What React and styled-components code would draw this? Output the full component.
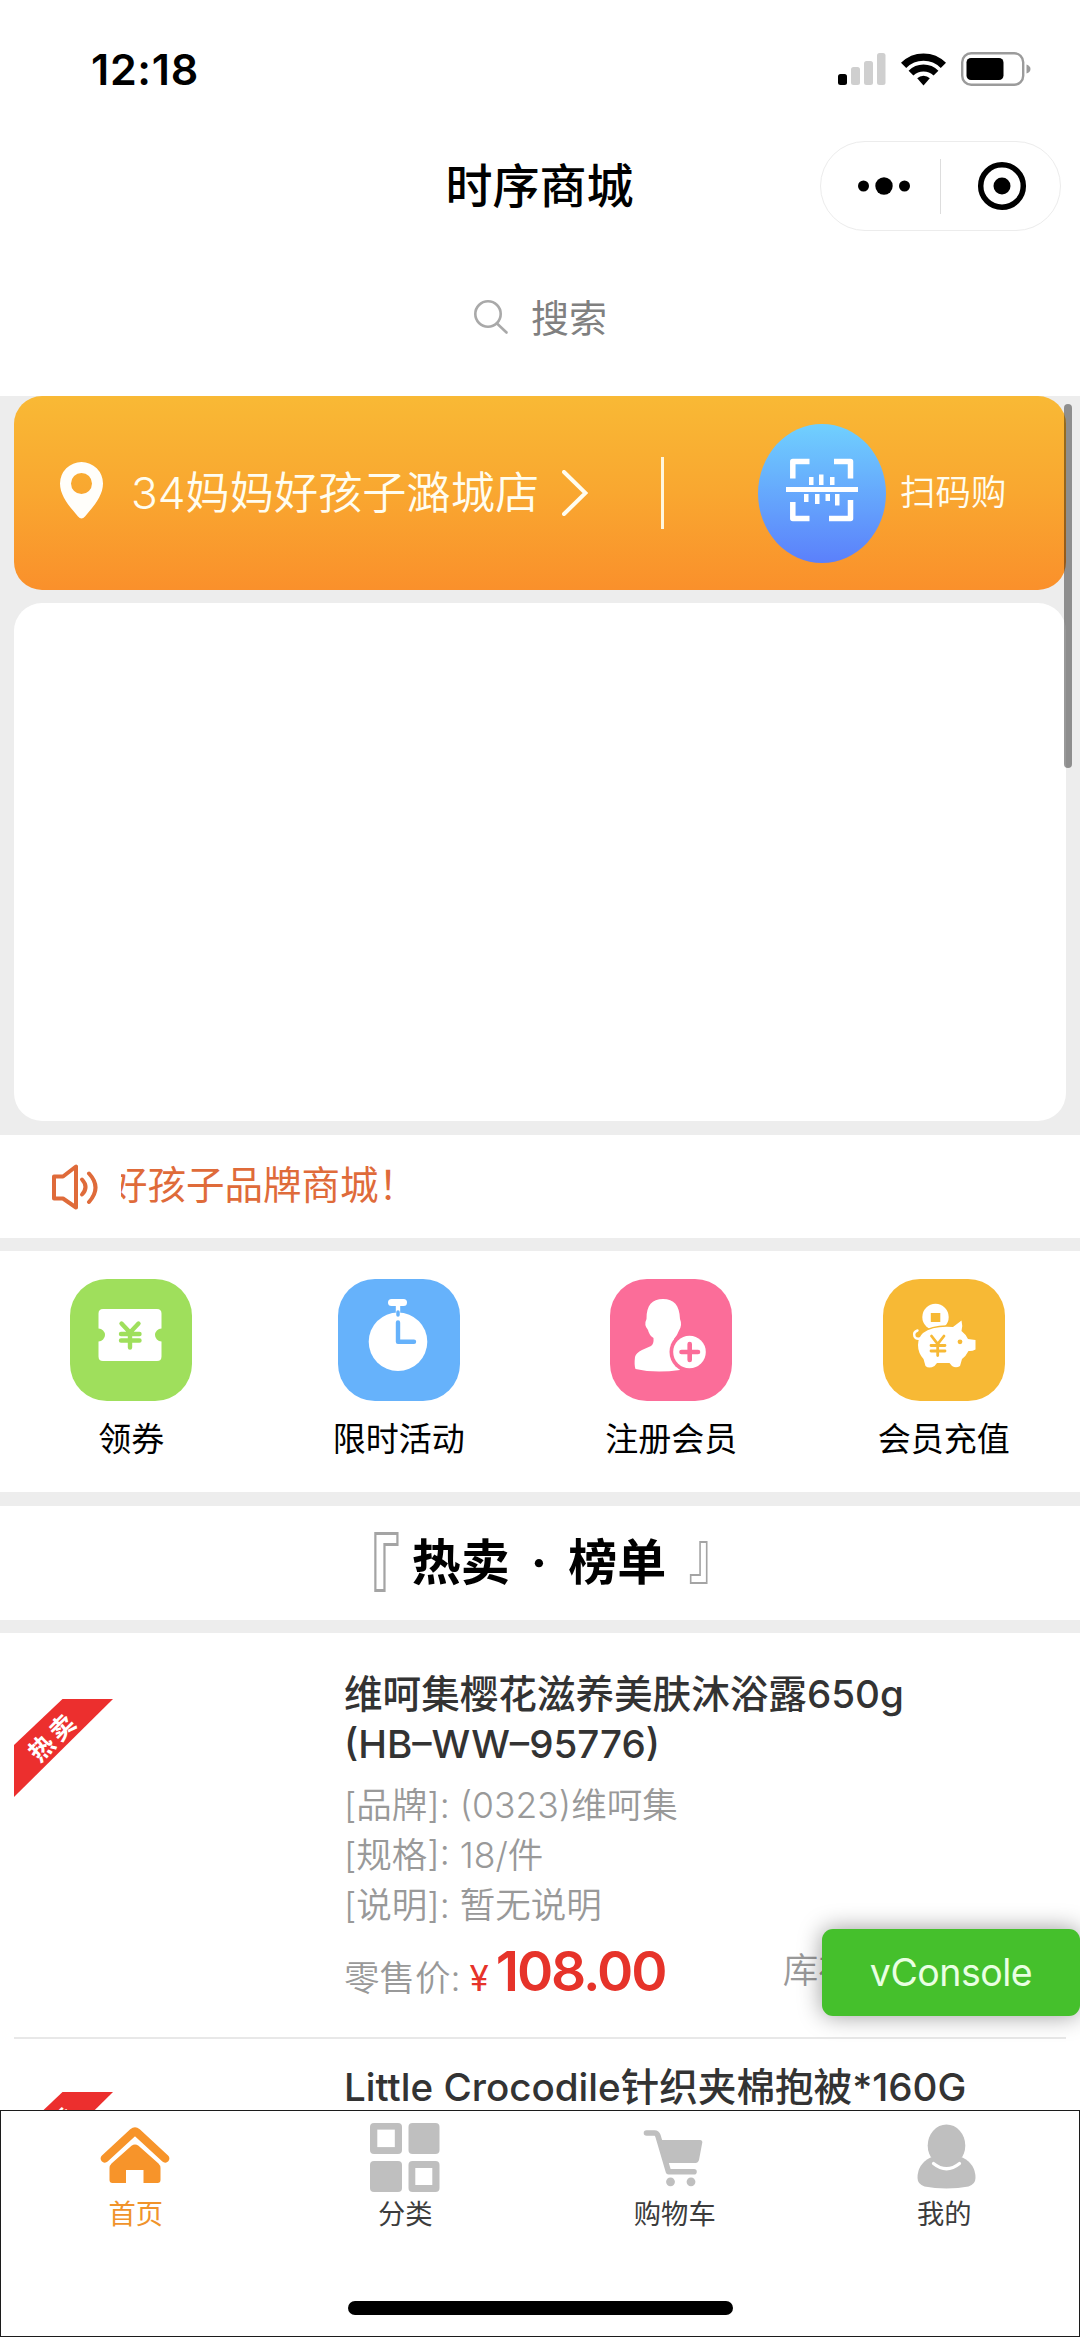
import React from 'react';
import styled, { createGlobalStyle } from 'styled-components';

const GlobalStyle = createGlobalStyle`
  * {
    box-sizing: border-box;
  }

  body {
    margin: 0;
    background: #ffffff;
    font-family: 'Inter', 'Noto Sans CJK SC', sans-serif;
    color: #000000;
  }

  svg {
    display: block;
    flex-shrink: 0;
  }
`;

const Screen = styled.div`
  width: 1080px;
  height: 2337px;
  display: flex;
  flex-direction: column;
  overflow: hidden;
  background: #ffffff;
`;

/* header */

const StatusBar = styled.div`
  height: 136px;
  padding: 1px 49px 0 91px;
  display: flex;
  align-items: center;
  justify-content: space-between;
`;

const Clock = styled.div`
  font-size: 43px;
  font-weight: 600;
  line-height: 50px;
  letter-spacing: 0.7px;
`;

const StatusIcons = styled.div`
  display: flex;
  align-items: center;
  gap: 15px;
`;

const NavBar = styled.div`
  height: 100px;
  padding-right: 19px;
  display: grid;
  grid-template-columns: 820px 241px;
  align-items: center;
`;

const NavTitle = styled.h1`
  margin: 0;
  padding-left: 259px;
  text-align: center;
  font-size: 47px;
  font-weight: 500;
  line-height: 60px;
`;

const Capsule = styled.div`
  height: 90px;
  border: 1.5px solid #ececec;
  border-radius: 45px;
  display: flex;
  align-items: center;
`;

const CapsuleButton = styled.div`
  width: 119px;
  padding-left: ${({ $shift }) => $shift || 0}px;
  display: flex;
  justify-content: center;
`;

const CapsuleLine = styled.div`
  width: 1px;
  height: 55px;
  background: #dddddd;
`;

const SearchBar = styled.div`
  height: 160px;
  padding-top: 4px;
  display: flex;
  align-items: center;
  justify-content: center;
  gap: 22px;
  color: #808080;
  font-size: 38px;
  line-height: 50px;

  svg {
    margin-bottom: 3px;
  }
`;

/* scrolling content */

const Content = styled.div`
  position: relative;
  height: 1714px;
  overflow: hidden;
  background: #ededed;
`;

const ScrollThumb = styled.div`
  position: absolute;
  top: 8px;
  right: 8px;
  width: 8px;
  height: 364px;
  border-radius: 4px;
  background: rgba(0, 0, 0, 0.4);
`;

const StoreBanner = styled.div`
  height: 194px;
  margin: 0 14px 13px;
  padding-left: 46px;
  border-radius: 28px;
  background: linear-gradient(180deg, #f9b935 0%, #f9a730 50%, #fa902b 100%);
  display: flex;
  align-items: center;
  color: #fffdf0;
`;

const StoreName = styled.div`
  width: 406px;
  flex-shrink: 0;
  margin: 0 25px 0 28px;
  font-size: 44.2px;
  font-weight: 350;
  line-height: 60px;
  white-space: nowrap;
`;

const BannerLine = styled.div`
  width: 3px;
  height: 72px;
  flex-shrink: 0;
  margin: 0 94px 0 73px;
  background: #fff6dd;
`;

const ScanBadge = styled.div`
  width: 128px;
  height: 139px;
  flex-shrink: 0;
  margin-right: 14px;
  padding-bottom: 6px;
  border-radius: 50%;
  background: linear-gradient(180deg, #70d0fe, #5b80fb);
  display: flex;
  align-items: center;
  justify-content: center;
`;

const ScanText = styled.div`
  font-size: 35.5px;
  font-weight: 350;
  line-height: 50px;
  white-space: nowrap;
`;

const Swiper = styled.div`
  height: 518px;
  margin: 0 14px 14px;
  border-radius: 28px;
  background: #ffffff;
`;

const Notice = styled.div`
  height: 103px;
  margin-bottom: 13px;
  padding-left: 51px;
  background: #ffffff;
  display: flex;
  align-items: center;
  gap: 22px;
`;

const Marquee = styled.div`
  flex: 1;
  margin-bottom: 3px;
  overflow: hidden;
  font-size: 38.5px;
  line-height: 50px;
  color: #df6b3a;
`;

const MarqueeText = styled.div`
  margin-left: -12px;
  white-space: nowrap;
`;

const Shortcuts = styled.div`
  height: 241px;
  margin-bottom: 14px;
  padding-top: 28px;
  background: #ffffff;
  display: flex;
  align-items: flex-start;
  justify-content: space-around;
`;

const Shortcut = styled.div`
  display: flex;
  flex-direction: column;
  align-items: center;
  gap: 14px;
  font-size: 33px;
  line-height: 48px;
`;

const Tile = styled.div`
  width: 122px;
  height: 122px;
  border-radius: 37px;
  background: ${({ $color }) => $color};
  color: ${({ $color }) => $color};
`;

const SectionTitle = styled.div`
  height: 114px;
  margin-bottom: 13px;
  padding-right: 9px;
  background: #ffffff;
  display: flex;
  align-items: center;
  justify-content: center;
`;

const Heading = styled.h2`
  margin: 0 22px 0 11px;
  font-size: 49px;
  font-weight: 700;
  line-height: 70px;
  word-spacing: 9.5px;
  white-space: pre;
`;

const Bracket = styled.span`
  font-size: ${({ $size }) => $size}px;
  line-height: 70px;
  color: #a4a4a4;
  transform: translateY(${({ $offset }) => $offset}px) scaleY(1.33);
`;

const Product = styled.div`
  height: 406px;
  padding: 0 14px;
  background: #ffffff;
`;

const ProductInner = styled.div`
  height: 100%;
  padding-top: ${({ $first }) => ($first ? 36 : 23)}px;
  border-bottom: 2px solid #e8e8e8;
  display: flex;
  align-items: flex-start;
`;

const Thumb = styled.div`
  width: 330px;
  flex-shrink: 0;
  padding-top: 30px;
`;

const Ribbon = styled.div`
  width: 99px;
  height: 98px;
  background: #ec2f2e;
  clip-path: polygon(49% 0, 100% 0, 0 100%, 0 47%);
  display: flex;
  align-items: center;
  justify-content: center;
`;

const RibbonText = styled.span`
  font-family: 'Noto Sans CJK SC', sans-serif;
  font-size: 25px;
  font-weight: 700;
  line-height: 28px;
  letter-spacing: 4px;
  color: #ffffff;
  transform: translate(-11px, -13px) rotate(-45deg);
  white-space: nowrap;
`;

const Info = styled.div`
  flex: 1;
  min-width: 0;
`;

const Name = styled.h3`
  margin: 0 0 12px;
  font-size: 38.6px;
  font-weight: 500;
  line-height: 50px;
  color: #333333;
  white-space: pre-line;
`;

const Meta = styled.div`
  font-size: 35.5px;
  font-weight: 350;
  line-height: 50px;
  color: #999999;
`;

const PriceRow = styled.div`
  height: 66px;
  margin-top: 7px;
  display: flex;
  align-items: baseline;
  font-size: 35.5px;
  font-weight: 350;
  line-height: 66px;
  color: #999999;
`;

const Currency = styled.span`
  margin: 0 7px 0 9px;
  font-size: 35px;
  font-weight: 400;
  color: #e6332a;
`;

const Price = styled.span`
  width: 287px;
  font-size: 55px;
  font-weight: 600;
  letter-spacing: -2.1px;
  color: #e6332a;
`;

const Stock = styled.span`
  position: relative;
  top: -8px;
`;

const ConsoleButton = styled.div`
  position: absolute;
  right: 0;
  top: 1533px;
  width: 258px;
  height: 87px;
  border-radius: 11px;
  background: #45c02c;
  box-shadow: 0 0 23px rgba(0, 0, 0, 0.4);
  display: flex;
  align-items: center;
  justify-content: center;
  font-size: 37.5px;
  letter-spacing: -0.5px;
  color: #e9ffe2;
`;

/* bottom tabs */

const TabBar = styled.div`
  height: 227px;
  border: 1px solid #1c1c1c;
  background: #ffffff;
  display: flex;
  flex-direction: column;
  align-items: center;
`;

const Tabs = styled.div`
  align-self: stretch;
  height: 190px;
  padding-top: 11px;
  display: flex;
`;

const Tab = styled.div`
  flex: 1;
  display: flex;
  flex-direction: column;
  align-items: center;
  gap: 4px;
  font-size: 27.3px;
  line-height: 38px;
  color: ${({ $active }) => ($active ? '#f0932b' : '#3c3c3c')};
`;

const HomeIndicator = styled.div`
  width: 385px;
  height: 14px;
  border-radius: 7px;
  background: #000000;
`;

const SignalIcon = () => (
  <svg width="48" height="34" viewBox="0 0 48 34">
    <rect x="0" y="22" width="9" height="11" rx="2.5" fill="#000" />
    <rect x="13" y="15" width="9" height="18" rx="2.5" fill="#cfcfcf" />
    <rect x="26" y="9" width="9" height="24" rx="2.5" fill="#cfcfcf" />
    <rect x="39" y="1" width="8.5" height="32" rx="2.5" fill="#cfcfcf" />
  </svg>
);

const WifiIcon = () => (
  <svg width="45" height="34" viewBox="0 0 45 34">
    <g fill="none" stroke="#000">
      <path d="M2.6 13.4a28 28 0 0 1 39.8 0" strokeWidth="7.4" />
      <path d="M10 21.2a17.6 17.6 0 0 1 25 0" strokeWidth="6.8" />
    </g>
    <path d="M22.5 33.5l-6.3-7.2a9 9 0 0 1 12.6 0z" fill="#000" />
  </svg>
);

const BatteryIcon = () => (
  <svg width="70" height="34" viewBox="0 0 70 34">
    <rect x="1.2" y="1.2" width="61" height="31.5" rx="9" fill="none" stroke="#9b9b9b" strokeWidth="2.4" />
    <rect x="5.5" y="6" width="37" height="22" rx="4.5" fill="#000" />
    <path d="M65.5 12.5q4 1.5 4 4.5t-4 4.5z" fill="#9b9b9b" />
  </svg>
);

const MoreIcon = () => (
  <svg width="54" height="20" viewBox="0 0 54 20">
    <circle cx="6.5" cy="10" r="5.5" />
    <circle cx="27" cy="10" r="8.7" />
    <circle cx="47.5" cy="10" r="5.5" />
  </svg>
);

const TargetIcon = () => (
  <svg width="50" height="50" viewBox="0 0 50 50">
    <circle cx="25" cy="25" r="21.3" fill="none" stroke="#000" strokeWidth="5.5" />
    <circle cx="25" cy="25" r="8.5" />
  </svg>
);

const SearchIcon = () => (
  <svg width="36" height="36" viewBox="0 0 36 36" fill="none" stroke="#a9a9a9" strokeWidth="2.6">
    <circle cx="15" cy="15" r="12.7" />
    <path d="M24 24.5l9.5 9" strokeLinecap="round" />
  </svg>
);

const PinIcon = () => (
  <svg width="43" height="63" viewBox="0 0 43 63">
    <path
      d="M21.5 0A21.5 21.5 0 0 0 0 21.5C0 34 10 45 18 54.5q3.5 4 7 0C33 45 43 34 43 21.5A21.5 21.5 0 0 0 21.5 0zm0 11a10.5 10.5 0 1 1 0 21 10.5 10.5 0 0 1 0-21z"
      fill="#fffefa"
      fillRule="evenodd"
    />
  </svg>
);

const ArrowIcon = () => (
  <svg width="26" height="46" viewBox="0 0 26 46" fill="none" stroke="#fffdf0" strokeWidth="4">
    <path d="M2 2l21.5 21L2 44" strokeLinecap="round" />
  </svg>
);

const ScanIcon = () => (
  <svg width="72" height="68" viewBox="0 0 72 68" fill="#fff">
    <g fill="none" stroke="#fff" strokeWidth="5.5" strokeLinejoin="round">
      <path d="M6.8 22.5V5.5H23.5" />
      <path d="M48 5.5H64.5V22.5" />
      <path d="M6.8 46V62.5H23.5" />
      <path d="M43 62.5H64.5V44" />
    </g>
    <rect x="0" y="31" width="72" height="5" />
    <rect x="23" y="21" width="4.5" height="8" />
    <rect x="33" y="18.5" width="4.5" height="10.5" />
    <rect x="44" y="21" width="4.5" height="8" />
    <rect x="18" y="38" width="4.5" height="8" />
    <rect x="29" y="38" width="4.5" height="10" />
    <rect x="39.5" y="38" width="4.5" height="7" />
    <rect x="49" y="38" width="4.5" height="11.5" />
  </svg>
);

const SpeakerIcon = () => (
  <svg width="48" height="46" viewBox="0 0 48 46" fill="none" stroke="#df6b3a" strokeWidth="4" strokeLinecap="round" strokeLinejoin="round">
    <path d="M3 12.5H12L25 2.5V43.5L12 34.5H3z" />
    <path d="M31 15.5q7 7.5 0 15" />
    <path d="M38 9.5q13 14 0 28.5" />
  </svg>
);

const CouponIcon = () => (
  <svg viewBox="0 0 122 122">
    <path
      d="M33 30H87q4.5 0 4.5 4.5V49.5a6.5 6.5 0 0 0 0 13V77.5q0 4.5-4.5 4.5H33q-4.5 0-4.5-4.5V62.5a6.5 6.5 0 0 0 0-13V34.5q0-4.5 4.5-4.5z"
      fill="#fff"
    />
    <path d="M51.5 44.5L60 53.5L68.5 44.5M51 55H69.5M51 61.5H69.5M60 54V68.5" fill="none" stroke="currentColor" strokeWidth="4.4" strokeLinecap="round" />
  </svg>
);

const TimerIcon = () => (
  <svg viewBox="0 0 122 122">
    <circle cx="60" cy="62.7" r="29.3" fill="#fff" />
    <rect x="50" y="20" width="19" height="7" rx="3.5" fill="#fff" />
    <rect x="57.8" y="25" width="4.4" height="9" fill="#fff" />
    <path d="M60 33v3" stroke="currentColor" strokeWidth="3.5" strokeLinecap="round" />
    <path d="M60 43.5V62.8H76" fill="none" stroke="currentColor" strokeWidth="4.4" strokeLinecap="round" strokeLinejoin="round" />
  </svg>
);

const MemberIcon = () => (
  <svg viewBox="0 0 122 122">
    <path
      d="M36.5 40C36.5 26 42 20 53 20S69.5 26 70 40Q72.5 46 69 51.5Q67 57 64 60V70L70 91Q45 94.5 25.5 90Q24 86 25 78Q26 74 32 71L41 67Q44 65 43.5 59Q39 56 38 51Q33.5 46 36.5 40z"
      fill="#fff"
    />
    <circle cx="79.5" cy="73" r="20" fill="currentColor" />
    <circle cx="79.5" cy="73" r="16.3" fill="#fff" />
    <path d="M71.5 73H88M79.7 65V81" stroke="currentColor" strokeWidth="4.6" strokeLinecap="round" />
  </svg>
);

const PiggyIcon = () => (
  <svg viewBox="0 0 122 122">
    <circle cx="52.5" cy="38" r="13.2" fill="#fff" />
    <rect x="47.8" y="34" width="9.5" height="9" fill="currentColor" />
    <path
      d="M40 54Q50 46.5 70 48L78.5 41.5Q80 47 78.5 52Q83 55.5 85 60L92.5 61V70.5Q89 72.5 85.5 72Q83 77 79 80L77 87Q73 89.5 69 87L66.5 84H54L51.5 87Q46 90 42.5 87L40.5 80Q35 74 35 66Q35 58.5 40 54z"
      fill="#fff"
      stroke="currentColor"
      strokeWidth="3"
      paintOrder="stroke"
    />
    <path d="M34.5 51.5Q30 53 31.5 57.5Q33 60.5 37 59.5" fill="none" stroke="#fff" strokeWidth="2.4" strokeLinecap="round" />
    <circle cx="77" cy="62.8" r="2.4" fill="currentColor" />
    <path d="M48.5 57L54.7 65L61 57M48 66.5H62M48 72H62M54.7 65V76.5" fill="none" stroke="currentColor" strokeWidth="2.8" strokeLinecap="round" />
  </svg>
);

const HomeIcon = () => (
  <svg width="80" height="70" viewBox="1 0 80 70" fill="#f7942a">
    <path d="M9.8 36.5L38 10.5Q40 8.8 42 10.5L70.2 36.5" fill="none" stroke="#f7942a" strokeWidth="8.4" strokeLinecap="round" />
    <path d="M36.5 23.8Q40 21 43.5 23.8L63.5 41.5Q65.5 43.5 65.5 46V58Q65.5 61 62.5 61H48.5V48H31V61H17.5Q14.5 61 14.5 58V46Q14.5 43.5 16.5 41.5z" />
  </svg>
);

const CategoryIcon = () => (
  <svg width="80" height="70" viewBox="0 0 80 70" fill="#bfbfbf">
    <rect x="5" y="1" width="32" height="31" rx="4" />
    <rect x="43.5" y="1" width="31" height="31" rx="4" />
    <rect x="5" y="39" width="32" height="31" rx="4" />
    <rect x="43.5" y="39" width="31" height="31" rx="4" />
    <rect x="12.3" y="7.6" width="17.5" height="17.5" fill="#fff" />
    <rect x="50.3" y="46" width="17" height="17" fill="#fff" />
  </svg>
);

const CartIcon = () => (
  <svg width="80" height="70" viewBox="0 0 80 70" fill="#bfbfbf">
    <path d="M11.5 11H19.5Q22 11 23 14L33.5 49.8H59" fill="none" stroke="#bfbfbf" strokeWidth="5.6" strokeLinecap="round" strokeLinejoin="round" />
    <path d="M24 18H65Q67.5 18 67.3 20.5L64 38Q63 41 60.5 41H30z" />
    <circle cx="35.5" cy="59.8" r="4.4" />
    <circle cx="56" cy="59.8" r="4.4" />
  </svg>
);

const UserIcon = () => (
  <svg width="80" height="70" viewBox="-2.5 0 80 70" fill="#bfbfbf">
    <path d="M24 35.5Q11 42 11 56Q11 62 18 64.5Q28 66.5 40 66.5T62 64.5Q69 62 69 56Q69 42 56 35.5z" />
    <ellipse cx="40" cy="23.5" rx="18.8" ry="21" />
    <path d="M27 41.5Q40 52 53 41.5" fill="none" stroke="#fff" strokeWidth="3.2" strokeLinecap="round" />
  </svg>
);

const shortcuts = [
  { label: '领券', color: '#9fdf5c', icon: <CouponIcon /> },
  { label: '限时活动', color: '#66b2fb', icon: <TimerIcon /> },
  { label: '注册会员', color: '#fb6d99', icon: <MemberIcon /> },
  { label: '会员充值', color: '#f7b935', icon: <PiggyIcon /> },
];

const products = [
  {
    name: '维呵集樱花滋养美肤沐浴露650g\n(HB–WW–95776)',
    brand: '(0323)维呵集',
    spec: '18/件',
    desc: '暂无说明',
    price: '108.00',
  },
  { name: 'Little Crocodile针织夹棉抱被*160G' },
];

const tabs = [
  { label: '首页', icon: <HomeIcon />, active: true },
  { label: '分类', icon: <CategoryIcon /> },
  { label: '购物车', icon: <CartIcon /> },
  { label: '我的', icon: <UserIcon /> },
];

const ProductCard = ({ product, first }) => (
  <Product>
    <ProductInner $first={first}>
      <Thumb>
        <Ribbon>
          <RibbonText>热卖</RibbonText>
        </Ribbon>
      </Thumb>
      <Info>
        <Name>{product.name}</Name>
        {product.brand && (
          <>
            <Meta>[品牌]: {product.brand}</Meta>
            <Meta>[规格]: {product.spec}</Meta>
            <Meta>[说明]: {product.desc}</Meta>
            <PriceRow>
              零售价:
              <Currency>¥</Currency>
              <Price>{product.price}</Price>
              <Stock>库存</Stock>
            </PriceRow>
          </>
        )}
      </Info>
    </ProductInner>
  </Product>
);

const App = () => (
  <>
    <GlobalStyle />
    <Screen>
      <StatusBar>
        <Clock>12:18</Clock>
        <StatusIcons>
          <SignalIcon />
          <WifiIcon />
          <BatteryIcon />
        </StatusIcons>
      </StatusBar>
      <NavBar>
        <NavTitle>时序商城</NavTitle>
        <Capsule>
          <CapsuleButton $shift={6}>
            <MoreIcon />
          </CapsuleButton>
          <CapsuleLine />
          <CapsuleButton $shift={2}>
            <TargetIcon />
          </CapsuleButton>
        </Capsule>
      </NavBar>
      <SearchBar>
        <SearchIcon />
        搜索
      </SearchBar>

      <Content>
        <StoreBanner>
          <PinIcon />
          <StoreName>34妈妈好孩子潞城店</StoreName>
          <ArrowIcon />
          <BannerLine />
          <ScanBadge>
            <ScanIcon />
          </ScanBadge>
          <ScanText>扫码购</ScanText>
        </StoreBanner>
        <Swiper />
        <Notice>
          <SpeakerIcon />
          <Marquee>
            <MarqueeText>好孩子品牌商城！</MarqueeText>
          </Marquee>
        </Notice>
        <Shortcuts>
          {shortcuts.map((item) => (
            <Shortcut key={item.label}>
              <Tile $color={item.color}>{item.icon}</Tile>
              {item.label}
            </Shortcut>
          ))}
        </Shortcuts>
        <SectionTitle>
          <Bracket $size={66} $offset={12}>『</Bracket>
          <Heading>热卖 · 榜单</Heading>
          <Bracket $size={48} $offset={-8}>』</Bracket>
        </SectionTitle>
        {products.map((product, index) => (
          <ProductCard key={product.name} product={product} first={index === 0} />
        ))}
        <ConsoleButton>vConsole</ConsoleButton>
        <ScrollThumb />
      </Content>

      <TabBar>
        <Tabs>
          {tabs.map((tab) => (
            <Tab key={tab.label} $active={tab.active}>
              {tab.icon}
              {tab.label}
            </Tab>
          ))}
        </Tabs>
        <HomeIndicator />
      </TabBar>
    </Screen>
  </>
);

export default App;
